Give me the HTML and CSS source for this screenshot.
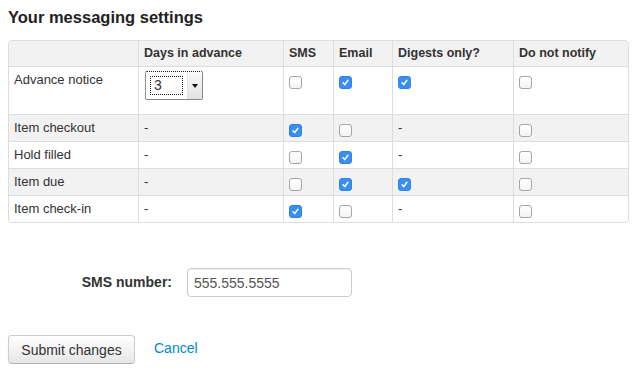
FILE: index.html
```html
<!DOCTYPE html>
<html lang="en">
<head>
    <meta charset="UTF-8">
    <title>Your messaging settings</title>
    <link rel="stylesheet" href="styles.css">
</head>
<body>
    <div class="page">
        <h2>Your messaging settings</h2>

        <table class="messaging">
            <tr class="head">
                <th class="c-type">&nbsp;</th>
                <th class="c-days">Days in advance</th>
                <th class="c-sms">SMS</th>
                <th class="c-email">Email</th>
                <th class="c-digest">Digests only?</th>
                <th class="c-none">Do not notify</th>
            </tr>
            <tr class="tall">
                <td>Advance notice</td>
                <td>
                    <div class="select">
                        <span class="select-value"><span class="focus">3</span></span>
                        <span class="select-arrow"><span class="tri"></span></span>
                    </div>
                </td>
                <td><span class="box"></span></td>
                <td><span class="box on"><svg viewBox="0 0 13 13"><path d="M3.6 6.9 L5.6 9 L9.4 3.8"/></svg></span></td>
                <td><span class="box on"><svg viewBox="0 0 13 13"><path d="M3.6 6.9 L5.6 9 L9.4 3.8"/></svg></span></td>
                <td><span class="box"></span></td>
            </tr>
            <tr>
                <td>Item checkout</td>
                <td>-</td>
                <td><span class="box on"><svg viewBox="0 0 13 13"><path d="M3.6 6.9 L5.6 9 L9.4 3.8"/></svg></span></td>
                <td><span class="box"></span></td>
                <td>-</td>
                <td><span class="box"></span></td>
            </tr>
            <tr>
                <td>Hold filled</td>
                <td>-</td>
                <td><span class="box"></span></td>
                <td><span class="box on"><svg viewBox="0 0 13 13"><path d="M3.6 6.9 L5.6 9 L9.4 3.8"/></svg></span></td>
                <td>-</td>
                <td><span class="box"></span></td>
            </tr>
            <tr>
                <td>Item due</td>
                <td>-</td>
                <td><span class="box"></span></td>
                <td><span class="box on"><svg viewBox="0 0 13 13"><path d="M3.6 6.9 L5.6 9 L9.4 3.8"/></svg></span></td>
                <td><span class="box on"><svg viewBox="0 0 13 13"><path d="M3.6 6.9 L5.6 9 L9.4 3.8"/></svg></span></td>
                <td><span class="box"></span></td>
            </tr>
            <tr>
                <td>Item check-in</td>
                <td>-</td>
                <td><span class="box on"><svg viewBox="0 0 13 13"><path d="M3.6 6.9 L5.6 9 L9.4 3.8"/></svg></span></td>
                <td><span class="box"></span></td>
                <td>-</td>
                <td><span class="box"></span></td>
            </tr>
        </table>

        <div class="field">
            <label class="field-label" for="sms">SMS number:</label>
            <input class="field-input" id="sms" type="text" value="555.555.5555">
        </div>

        <div class="actions">
            <button class="btn" type="button">Submit changes</button>
            <a class="cancel" href="#">Cancel</a>
        </div>
    </div>
</body>
</html>
```

FILE: styles.css
```css
body {
    margin: 0;
    background-color: #ffffff;
    color: #333333;
    font-family: "Liberation Sans", Arial, sans-serif;
    font-size: 13px;
}
.page {
    padding: 7px 8px 0;
}
h2 {
    margin: 0 0 13px;
    font-size: 16.5px;
    line-height: 20px;
    font-weight: bold;
    color: #222222;
}

/* table */
.messaging {
    width: 621px;
    table-layout: fixed;
    border-collapse: separate;
    border-spacing: 0;
    border: 1px solid #dddddd;
    border-radius: 4px;
}
.messaging th, .messaging td {
    box-sizing: border-box;
    padding: 4px 5px;
    line-height: 18px;
    text-align: left;
    vertical-align: top;
    border-left: 1px solid #dddddd;
    border-top: 1px solid #dddddd;
}
.messaging th:first-child, .messaging td:first-child {
    border-left: 0;
}
.messaging .head th {
    border-top: 0;
    font-size: 12.5px;
    line-height: 17px;
    background-color: #f2f2f2;
}
.messaging .head th:first-child {
    border-top-left-radius: 4px;
}
.messaging .head th:last-child {
    border-top-right-radius: 4px;
}
.messaging tr:nth-child(odd) td {
    background-color: #f2f2f2;
}
.messaging tr:last-child td:first-child {
    border-bottom-left-radius: 4px;
}
.messaging tr:last-child td:last-child {
    border-bottom-right-radius: 4px;
}
.c-type { width: 129px; }
.c-days { width: 145px; }
.c-sms { width: 50px; }
.c-email { width: 59px; }
.c-digest { width: 121px; }
.c-none { width: 115px; }

/* select */
.select {
    box-sizing: border-box;
    display: flex;
    width: 58px;
    height: 29px;
    margin: 0 0 10px 1px;
    border: 1px dotted #222222;
    border-right-style: solid;
    border-right-color: #888888;
    border-bottom: 1px solid #888888;
    border-radius: 2px;
    background-color: #ffffff;
}
.select-value {
    flex: 1;
    padding: 4px 4px 0 4px;
}
.focus {
    display: block;
    height: 17px;
    padding-left: 3px;
    border: 1px dotted #222222;
    font-size: 14px;
    line-height: 17px;
    color: #333333;
}
.select-arrow {
    width: 14px;
    display: flex;
    align-items: center;
    justify-content: center;
    border-left: 1px solid #e4e4e4;
    background: linear-gradient(#fafafa, #e2e2e2);
}
.tri {
    width: 0;
    height: 0;
    border-left: 3px solid transparent;
    border-right: 3px solid transparent;
    border-top: 4px solid #111111;
}

/* checkboxes */
.box {
    box-sizing: border-box;
    display: block;
    width: 13px;
    height: 13px;
    margin-top: 5px;
    border: 1px solid #a6a6a6;
    border-radius: 3px;
    background: linear-gradient(#ffffff, #f4f4f4);
}
.box.on {
    border-color: #2f83ec;
    background: #3b8ef0;
}
.box svg {
    display: block;
    width: 11px;
    height: 11px;
    margin: 0;
}
.box path {
    fill: none;
    stroke: #ffffff;
    stroke-width: 1.7;
    stroke-linecap: round;
    stroke-linejoin: round;
}

/* sms number */
.field {
    display: flex;
    align-items: flex-start;
    margin-top: 45px;
}
.field-label {
    width: 164px;
    padding-top: 0;
    text-align: right;
    font-size: 14px;
    line-height: 30px;
    font-weight: bold;
    color: #333333;
    margin-top: -1px;
}
.field-input {
    box-sizing: border-box;
    width: 165px;
    height: 29px;
    margin: 0 0 0 15px;
    padding: 4px 6px;
    border: 1px solid #cccccc;
    border-radius: 4px;
    font-family: "Liberation Sans", Arial, sans-serif;
    font-size: 14px;
    color: #555555;
    box-shadow: inset 0 1px 1px rgba(0, 0, 0, 0.05);
}

/* buttons */
.actions {
    display: flex;
    align-items: center;
    margin-top: 38px;
}
.btn {
    box-sizing: border-box;
    width: 127px;
    height: 29px;
    padding: 4px 12px;
    border: 1px solid #cccccc;
    border-bottom-color: #b3b3b3;
    border-radius: 4px;
    background: linear-gradient(#ffffff, #e6e6e6);
    box-shadow: 0 1px 2px rgba(0, 0, 0, 0.05);
    font-family: "Liberation Sans", Arial, sans-serif;
    font-size: 14px;
    color: #333333;
}
.cancel {
    margin-left: 19px;
    margin-top: -4px;
    font-size: 14px;
    color: #0088cc;
    text-decoration: none;
}
```
